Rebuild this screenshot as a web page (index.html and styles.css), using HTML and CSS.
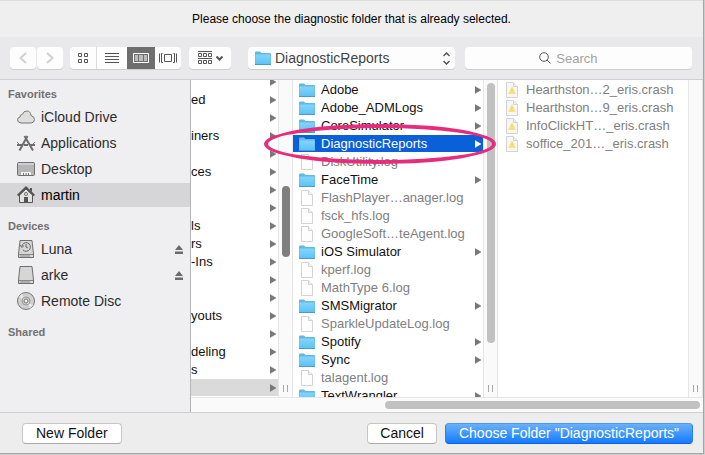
FILE: index.html
```html
<!DOCTYPE html>
<html lang="en">
<head>
  <meta charset="UTF-8">
  <meta name="viewport" content="width=device-width, initial-scale=1.0">
  <title>Choose Folder</title>
  <link rel="stylesheet" href="styles.css">
</head>
<body>
  <!-- shared icons -->
  <svg class="sprite" aria-hidden="true">
    <defs>
      <linearGradient id="folderFill" x1="0" y1="0" x2="0" y2="1">
        <stop offset="0" stop-color="#83d5fb"/>
        <stop offset="1" stop-color="#5fc3f5"/>
      </linearGradient>
    </defs>
    <symbol id="folder" viewBox="0 0 16 14">
      <path d="M0 13V1.500Q0 .5 1 .5H5L6.500 2H15Q16 2 16 3V13Z" fill="#63b7e2"/>
      <path d="M.5 3.500H15.500V13H.5Z" fill="url(#folderFill)"/>
      <path d="M0 13.500H16" stroke="#4a9cc7"/>
    </symbol>
    <symbol id="doc" viewBox="0 0 16 16">
      <path d="M2.500 .5H9.500L13.500 4.500V15.500H2.500Z" fill="#fdfdfd" stroke="#d3d3d3"/>
      <path d="M9.500 .5V4.500H13.500" fill="#f3f3f3" stroke="#d3d3d3"/>
    </symbol>
    <symbol id="crash" viewBox="0 0 16 16">
      <path d="M2.500 .5H9.500L13.500 4.500V15.500H2.500Z" fill="#f6f6f6" stroke="#d3d3d3"/>
      <path d="M9.500 .5V4.500H13.500" fill="#eee" stroke="#d3d3d3"/>
      <path d="M8 4L12 12H4Z" fill="#f7e584"/>
      <path d="M8 7V9M8 10V11" stroke="#dcc870"/>
    </symbol>
    <symbol id="arrow" viewBox="0 0 6 8"><path d="M0 0.500L6 4L0 7.500Z" fill="currentColor" stroke="currentColor" stroke-width=".5"/></symbol>
    <symbol id="eject" viewBox="0 0 8 9"><path d="M4 0L8 5H0ZM0 6.500H8V9H0Z" fill="#6b6b6b"/></symbol>
  </svg>

  <main class="dialog">
    <p class="message">Please choose the diagnostic folder that is already selected.</p>

    <div class="toolbar">
      <div class="history">
        <button aria-label="Back"><svg width="8" height="12" viewBox="0 0 8 12"><path d="M7 1L1.500 6L7 11"/></svg></button>
        <button aria-label="Forward"><svg width="8" height="12" viewBox="0 0 8 12"><path d="M1 1L6.500 6L1 11"/></svg></button>
      </div>
      <div class="views">
        <button aria-label="Icons"><svg width="10" height="10" viewBox="0 0 10 10"><path d="M.5 .5H3.500V3.500H.5ZM6.500 .5H9.500V3.500H6.500ZM.5 6.500H3.500V9.500H.5ZM6.500 6.500H9.500V9.500H6.500Z"/></svg></button>
        <button aria-label="List"><svg width="14" height="10" viewBox="0 0 14 10"><path d="M0 .5H14M0 3.500H14M0 6.500H14M0 9.500H14"/></svg></button>
        <button class="active" aria-label="Columns"><svg width="16" height="10" viewBox="0 0 16 10"><path d="M.5 .5H15.500V9.500H.5Z"/><path class="bars" d="M2 2H5V8H2ZM6 2H10V8H6ZM11 2H14V8H11Z"/></svg></button>
        <button aria-label="Cover Flow"><svg width="18" height="10" viewBox="0 0 18 10"><path d="M5.500 1.500H12.500V8.500H5.500ZM.5 .5V9.500M17.500 .5V9.500M2 .5H3.500M2.500 .5V9.500H4M16 .5H14.500M15.500 .5V9.500H14"/></svg></button>
      </div>
      <button class="arrange" aria-label="Arrange">
        <svg width="14" height="14" viewBox="0 0 14 14"><path d="M0 .5H14M0 7.500H14M.5 2.500H3.500V5.500H.5ZM5.500 2.500H8.500V5.500H5.500ZM10.500 2.500H13.500V5.500H10.500ZM.5 9.500H3.500V12.500H.5ZM5.500 9.500H8.500V12.500H5.500ZM10.500 9.500H13.500V12.500H10.500Z"/></svg>
        <svg width="7" height="5" viewBox="0 0 7 5"><path d="M.5 .5L3.500 3.500L6.500 .5" stroke-width="2"/></svg>
      </button>
      <div class="location">
        <svg class="location-icon" width="16" height="14"><use href="#folder"/></svg>
        <select aria-label="Location"><option>DiagnosticReports</option></select>
        <svg class="location-arrows" width="7" height="13" viewBox="0 0 7 13"><path d="M.5 4L3.500 1L6.500 4M.5 9L3.500 12L6.500 9" stroke-width="1.500"/></svg>
      </div>
      <div class="search">
        <svg width="12" height="12" viewBox="0 0 12 12"><circle cx="5" cy="5" r="4.300"/><path d="M8 8L11.500 11.500"/></svg>
        <input type="search" placeholder="Search" aria-label="Search">
      </div>
    </div>

    <div class="content">
      <nav class="sidebar">
        <h2>Favorites</h2>
        <ul>
          <li><a href="#"><svg width="18" height="18" viewBox="0 0 18 18"><path d="M4 15Q.5 14.500 .5 11.800Q.7 9.500 3 9Q2.800 6.500 5.300 6.500Q6.500 3 9.800 3Q13.500 3 14 7.500Q17.500 8.500 17.500 11.500Q17.300 14.700 14 15Z" fill="#dedede" stroke="#777"/></svg>iCloud Drive</a></li>
          <li><a href="#"><svg width="18" height="18" viewBox="0 0 18 18"><path d="M7.500 2L16 16.500M10.500 2L2.500 16.500" fill="none" stroke="#6c6c6c" stroke-width="2"/><path d="M0 11H5M7 11H11M13 11H18" stroke="#6c6c6c" stroke-width="2"/><path d="M0 8L2 10M18 8L16 10" stroke="#777"/></svg>Applications</a></li>
          <li><a href="#"><svg width="18" height="18" viewBox="0 0 18 18"><rect x=".5" y="2.500" width="17" height="13" rx="1" fill="#b5b5b5" stroke="#6f6f6f"/><path d="M1 4H17" stroke="#e8e8e8"/><path d="M4 12H14V15H4Z" fill="#f2f2f2"/><path d="M6.500 13V15M9 13V15M11.500 13V15" stroke="#777"/></svg>Desktop</a></li>
          <li><a class="current" href="#"><svg width="18" height="18" viewBox="0 0 18 18"><path d="M2.500 9V16.500H15.500V9L9 3Z" fill="#e2e2e2" stroke="#555"/><path d="M.7 9.500L9 1.500L17.300 9.500" fill="none" stroke="#555" stroke-width="2"/><path d="M13 2H15V6L13 4Z" fill="#555"/><path d="M7 11H11V17H7Z" fill="#555"/><circle cx="9" cy="8" r="1.500" fill="#fff" stroke="#666"/></svg>martin</a></li>
        </ul>
        <h2>Devices</h2>
        <ul>
          <li><a href="#"><svg width="18" height="18" viewBox="0 0 18 18"><path d="M3 .5H15L16.500 14V17.500H1.500V14Z" fill="#d6d6d6" stroke="#6f6f6f"/><path d="M2 14.500H16M3 16H13" stroke="#888"/><path d="M4.800 6.500A4.300 4.300 0 1 1 6 10M3 5L4.800 7.500L7 5.500M9 4V7L11 8" fill="none" stroke="#666"/></svg>Luna</a><button class="eject" aria-label="Eject Luna"><svg width="8" height="9"><use href="#eject"/></svg></button></li>
          <li><a href="#"><svg width="18" height="18" viewBox="0 0 18 18"><path d="M3 .5H15L16.500 14V17.500H1.500V14Z" fill="#d6d6d6" stroke="#6f6f6f"/><path d="M2 14.500H16M3 16H13" stroke="#888"/></svg>arke</a><button class="eject" aria-label="Eject arke"><svg width="8" height="9"><use href="#eject"/></svg></button></li>
          <li><a href="#"><svg width="18" height="18" viewBox="0 0 18 18"><circle cx="9" cy="9" r="8.500" fill="#cfcfcf" stroke="#777"/><path d="M9 9L2 5A8 8 0 0 1 5 2ZM9 9L16 13A8 8 0 0 1 13 16Z" fill="#e8e8e8"/><circle cx="9" cy="9" r="4" fill="none" stroke="#999"/><circle cx="9" cy="9" r="2" fill="#eee" stroke="#777"/></svg>Remote Disc</a></li>
        </ul>
        <h2>Shared</h2>
      </nav>

      <div class="browser">
        <div class="columns">
          <section class="column narrow">
            <ul class="files" id="library"></ul>
            <div class="track"><div class="thumb dark"></div><div class="grip"></div></div>
          </section>
          <section class="column">
            <ul class="files" id="logs"></ul>
            <div class="track"><div class="thumb"></div><div class="grip"></div></div>
          </section>
          <section class="column">
            <ul class="files" id="reports"></ul>
            <div class="track"><div class="grip"></div></div>
          </section>
        </div>
        <div class="bottom-track"><div class="bottom-thumb"></div></div>
        <div class="highlight"></div>
      </div>
    </div>

    <footer class="actions">
      <button class="new-folder">New Folder</button>
      <button class="cancel">Cancel</button>
      <button class="choose">Choose Folder "DiagnosticReports"</button>
    </footer>
  </main>
  <script src="script.js"></script>
</body>
</html>
```
FILE: styles.css
```css
* {
  box-sizing: border-box;
}

body {
  margin: 0;
  height: 100vh;
  padding: 0 2px 2px 0;
  background: #d4d4d4;
  font-family: "Liberation Sans", Arial, sans-serif;
  font-size: 13px;
  color: #111;
}

ul, p, h2 {
  margin: 0;
  padding: 0;
  list-style: none;
}

button, input, select {
  font: inherit;
  color: inherit;
  border: 0;
  margin: 0;
  padding: 0;
}

svg {
  display: block;
  flex: none;
}

.sprite {
  position: absolute;
  width: 0;
  height: 0;
}

.dialog {
  height: 100%;
  display: flex;
  flex-direction: column;
  background: #ededed;
  border-top: 1px solid #dedede;
  box-shadow: 0 0 1px 1px #a5a5a5;
}

.message {
  height: 36px;
  line-height: 36px;
  text-align: center;
  font-size: 12px;
  color: #000;
  background: #efeff0;
}

/* toolbar */
.toolbar {
  display: flex;
  align-items: center;
  height: 43px;
  padding: 0 11px 0 10px;
  background: #e9e8ea;
  border-bottom: 1px solid #cfcfcf;
}

.toolbar button, .location select, .search input {
  height: 22px;
  background: #fdfdfd;
  border-radius: 4px;
  box-shadow: 0 1px 0 #cdcdcd;
}

.toolbar button {
  display: flex;
  align-items: center;
  justify-content: center;
}

.toolbar svg {
  fill: none;
  stroke: #555;
}

.history {
  display: flex;
  gap: 1px;
  margin-right: 7px;
}

.history button {
  width: 26px;
}

.toolbar .history svg {
  stroke: #d0d0d0;
  stroke-width: 2;
}

.views {
  display: flex;
  margin-right: 8px;
}

.views button {
  width: 28px;
  border-radius: 0;
}

.views button:first-child {
  width: 27px;
  border-right: 1px solid #ddd;
  border-radius: 4px 0 0 4px;
}

.views button:nth-child(2) {
  width: 30px;
}

.views button:last-child {
  width: 26px;
  border-radius: 0 4px 4px 0;
}

.views .active {
  background: #6e6e6e;
}

.views .active svg {
  stroke: #fff;
}

.views .bars {
  fill: #bbb;
  stroke: none;
}

.arrange {
  width: 42px;
  gap: 4px;
  margin-right: 17px;
}

.location {
  position: relative;
  flex: 10;
  margin-right: 10px;
}

.location select {
  display: block;
  width: 100%;
  padding-left: 27px;
  appearance: none;
  font-size: 14px;
  color: #444;
}

.location-icon, .location-arrows, .search svg {
  position: absolute;
  pointer-events: none;
}

.location-icon {
  left: 7px;
  top: 4px;
}

.toolbar .location-icon {
  stroke: none;
}

.location-arrows {
  right: 5px;
  top: 5px;
}

.search {
  position: relative;
  flex: 11;
}

.search input {
  display: block;
  width: 100%;
  padding-left: calc(50% - 22px);
  outline: 0;
}

.search input::placeholder {
  color: #a2a2a2;
}

.search svg {
  left: calc(50% - 39px);
  top: 5px;
}

/* sidebar */
.content {
  flex: 1;
  min-height: 0;
  display: flex;
}

.sidebar {
  width: 191px;
  padding-top: 4px;
  background: #efeef0;
  border-right: 1px solid #b4b4b4;
}

.sidebar h2 {
  height: 20px;
  line-height: 20px;
  margin-bottom: 1px;
  padding-left: 8px;
  font-size: 11px;
  color: #717171;
}

.sidebar ul {
  display: grid;
  gap: 2px;
  margin-bottom: 9px;
}

.sidebar li {
  display: flex;
  align-items: center;
}

.sidebar a {
  flex: 1;
  display: flex;
  align-items: center;
  gap: 6px;
  height: 24px;
  padding-left: 17px;
  font-size: 14px;
  color: #2c2c2c;
  text-decoration: none;
}

.sidebar .current {
  background: #d6d5d7;
  color: #000;
}

.eject {
  margin-right: 7px;
  background: none;
}

/* column browser */
.browser {
  position: relative;
  flex: 1;
  min-width: 0;
  display: flex;
  flex-direction: column;
  background: #fff;
}

.columns {
  flex: 1;
  min-height: 0;
  display: flex;
}

.column {
  flex: 1;
  min-width: 0;
  display: flex;
  overflow: hidden;
}

.narrow {
  flex: 0 0 102px;
}

.files {
  flex: 1;
  min-width: 0;
  padding-top: 1px;
}

.files li {
  display: flex;
  align-items: center;
  gap: 6px;
  height: 17px;
  margin-bottom: 1px;
  padding: 0 2px 0 6px;
  line-height: 17px;
  white-space: nowrap;
}

.files span {
  flex: 1;
}

.files .arrow {
  color: #777;
}

/* scrolled part way down a row */
.narrow .files {
  margin-top: -8px;
}

.narrow .files li {
  padding-left: 0;
}

.files .file {
  color: #808080;
}

.files .parent {
  background: #dadada;
}

.files .selected, .files .selected .arrow {
  background: #0a60d8;
  color: #fff;
}

.track {
  width: 15px;
  display: flex;
  flex-direction: column;
  justify-content: space-between;
  align-items: center;
  padding: 3px 0 5px;
  background: #fafafa;
  border: 1px solid #e6e6e6;
  border-width: 0 1px;
}

.thumb {
  width: 8px;
  height: 260px;
  border-radius: 4px;
  background: #c1c1c1;
}

.thumb.dark {
  height: 71px;
  margin-top: 103px;
  background: #7f7f7f;
}

.grip {
  width: 5px;
  height: 7px;
  margin-top: auto;
  border: 1px solid #a8a8a8;
  border-width: 0 1px;
}

.bottom-track {
  height: 15px;
  padding: 3px 3px 0 194px;
  background: #fafafa;
  border-top: 1px solid #e6e6e6;
}

.bottom-thumb {
  height: 8px;
  border-radius: 4px;
  background: #c1c1c1;
}

.highlight {
  position: absolute;
  left: 73px;
  top: 44px;
  width: 232px;
  height: 40px;
  border: 4px solid #e62c7b;
  border-radius: 50%;
  pointer-events: none;
}

/* buttons */
.actions {
  display: flex;
  align-items: center;
  gap: 8px;
  height: 41px;
  padding: 0 10px 0 22px;
  border-top: 1px solid #cfcfcf;
}

.actions button {
  height: 21px;
  padding: 0 13px;
  font-size: 14px;
  line-height: 19px;
  background: #fff;
  border: 1px solid #c6c6c6;
  border-bottom-color: #aaa;
  border-radius: 4px;
}

.actions .new-folder {
  margin-right: auto;
}

.actions .cancel {
  padding: 0 12px;
}

.actions .choose {
  color: #fff;
  background: linear-gradient(#6bb0fa, #147bfe);
  border-color: #4a9af5 #2a80f0 #0c61e0;
}
```
FILE: script.js
```javascript
const library = ['', 'ed', '', 'iners', '', 'ces', '', '', 'ls', 'rs', '-Ins', '', '', 'youts', '', 'deling', 's', ''];

const logs = [
  'Adobe/', 'Adobe_ADMLogs/', 'CoreSimulator/', 'DiagnosticReports/', 'DiskUtility.log',
  'FaceTime/', 'FlashPlayer…anager.log', 'fsck_hfs.log', 'GoogleSoft…teAgent.log',
  'iOS Simulator/', 'kperf.log', 'MathType 6.log', 'SMSMigrator/', 'SparkleUpdateLog.log',
  'Spotify/', 'Sync/', 'talagent.log', 'TextWrangler/'
];

const reports = ['Hearthston…2_eris.crash', 'Hearthston…9_eris.crash', 'InfoClickHT…_eris.crash', 'soffice_201…_eris.crash'];

const arrow = '<svg class="arrow" width="6" height="8"><use href="#arrow"/></svg>';

function icon(name) {
  const height = name === 'folder' ? 14 : 16;
  return `<svg width="16" height="${height}"><use href="#${name}"/></svg>`;
}

document.getElementById('library').innerHTML = library.map((name, i) =>
  `<li class="${i === library.length - 1 ? 'parent' : ''}"><span>${name}</span>${arrow}</li>`
).join('');

// a trailing slash marks a folder
document.getElementById('logs').innerHTML = logs.map(name => {
  if (!name.endsWith('/')) {
    return `<li class="file">${icon('doc')}<span>${name}</span></li>`;
  }
  const label = name.slice(0, -1);
  const selected = label === 'DiagnosticReports' ? 'selected' : '';
  return `<li class="${selected}">${icon('folder')}<span>${label}</span>${arrow}</li>`;
}).join('');

document.getElementById('reports').innerHTML = reports.map(name =>
  `<li class="file">${icon('crash')}<span>${name}</span></li>`
).join('');
```
